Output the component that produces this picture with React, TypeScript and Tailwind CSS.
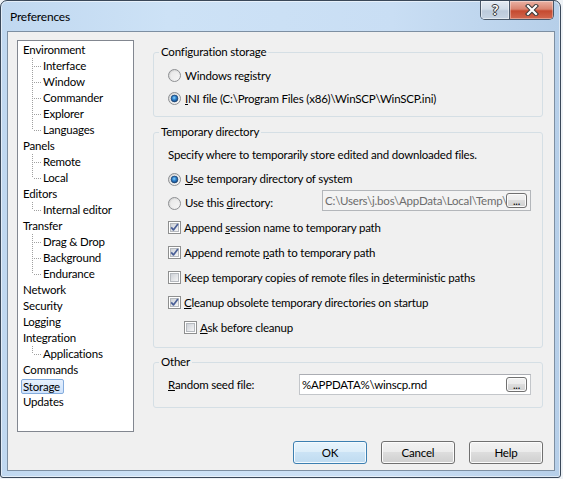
import React from "react";

type TreeNode = { label: string; children?: string[]; selected?: boolean };

const TREE: TreeNode[] = [
  { label: "Environment", children: ["Interface", "Window", "Commander", "Explorer", "Languages"] },
  { label: "Panels", children: ["Remote", "Local"] },
  { label: "Editors", children: ["Internal editor"] },
  { label: "Transfer", children: ["Drag & Drop", "Background", "Endurance"] },
  { label: "Network" },
  { label: "Security" },
  { label: "Logging" },
  { label: "Integration", children: ["Applications"] },
  { label: "Commands" },
  { label: "Storage", selected: true },
  { label: "Updates" },
];

function Radio({ checked }: { checked?: boolean }) {
  return (
    <svg width="13" height="13" viewBox="0 0 13 13" className="shrink-0">
      <defs>
        <linearGradient id="radio-ring" x1="0" y1="0" x2="1" y2="1">
          <stop offset="0" stopColor="#cfcfcf" />
          <stop offset="1" stopColor="#fdfdfd" />
        </linearGradient>
        <radialGradient id="radio-dot" cx="0.45" cy="0.4" r="0.65">
          <stop offset="0" stopColor="#8fd6fb" />
          <stop offset="0.45" stopColor="#2c7fcb" />
          <stop offset="1" stopColor="#123e74" />
        </radialGradient>
      </defs>
      <circle cx="6.5" cy="6.5" r="6" fill="url(#radio-ring)" stroke="#8d8f92" />
      <circle cx="6.5" cy="6.5" r="4.2" fill="#f4f4f4" fillOpacity="0.6" />
      {checked && <circle cx="6.5" cy="6.5" r="3.4" fill="url(#radio-dot)" stroke="#1b3f6b" strokeWidth="0.7" />}
    </svg>
  );
}

function Check({ checked }: { checked?: boolean }) {
  return (
    <svg width="13" height="13" viewBox="0 0 13 13" className="shrink-0">
      <defs>
        <linearGradient id="check-fill" x1="0" y1="0" x2="1" y2="1">
          <stop offset="0" stopColor="#cbcfd5" />
          <stop offset="1" stopColor="#f7f7f7" />
        </linearGradient>
      </defs>
      <rect x="0.5" y="0.5" width="12" height="12" fill="#fff" stroke="#8e8f8f" />
      <rect x="2.5" y="2.5" width="8" height="8" fill="url(#check-fill)" stroke="#b5b9be" />
      {checked && (
        <path d="M3.2 6.4 L5.4 8.9 L9.9 3.1" fill="none" stroke="#4a5f97" strokeWidth="1.7" strokeLinejoin="round" />
      )}
    </svg>
  );
}

function Dots() {
  return (
    <div className="mr-[3px] flex h-[15px] w-[21px] shrink-0 items-end justify-center rounded-[3px] border border-[#707070] bg-[linear-gradient(#f2f2f2_0%,#ebebeb_49%,#dddddd_50%,#cfcfcf_100%)] pb-[1px] text-[11px] leading-[11px] shadow-[inset_0_0_0_1px_#fbfbfb]">
      ...
    </div>
  );
}

function Button({ children, primary }: { children: React.ReactNode; primary?: boolean }) {
  return (
    <div
      className={
        primary
          ? "flex h-[23px] w-[74px] items-center justify-center rounded-[3px] border border-[#3c7fb1] bg-[linear-gradient(#e8f4fc_0%,#dcedf9_49%,#cbe3f5_50%,#bfdbf0_100%)] shadow-[inset_0_0_0_1px_#f4fafe]"
          : "flex h-[23px] w-[74px] items-center justify-center rounded-[3px] border border-[#707070] bg-[linear-gradient(#f2f2f2_0%,#ebebeb_49%,#dddddd_50%,#cfcfcf_100%)] shadow-[inset_0_0_0_1px_#fcfcfc]"
      }
    >
      {children}
    </div>
  );
}

function Tree() {
  return (
    <div className="mt-[8px] h-[392px] w-[117px] shrink-0 border border-[#828790] bg-white pt-[1px]">
      {TREE.map((node) => (
        <React.Fragment key={node.label}>
          <div className="flex h-[16px] items-center pl-[5px]">
            {node.selected ? (
              <span className="-ml-[2px] flex h-[15px] items-center rounded-[2px] border border-[#84acdd] bg-[linear-gradient(#e6f0fd,#cfe2fb)] pl-[1px] pr-[3px] leading-[13px]">
                {node.label}
              </span>
            ) : (
              <span>{node.label}</span>
            )}
          </div>
          {node.children?.map((child, i) => {
            const last = i === node.children!.length - 1;
            return (
              <div key={child} className="flex h-[16px] items-center pl-[14px]">
                <svg width="9" height="16" viewBox="0 0 9 16" className="shrink-0">
                  <line x1="0.5" y1="0" x2="0.5" y2={last ? 8 : 16} stroke="#a0a0a0" strokeDasharray="1 1" shapeRendering="crispEdges" />
                  <line x1="2" y1="8.5" x2="9" y2="8.5" stroke="#a0a0a0" strokeDasharray="1 1" shapeRendering="crispEdges" />
                </svg>
                <span className="ml-[2px]">{child}</span>
              </div>
            );
          })}
        </React.Fragment>
      ))}
    </div>
  );
}

export default function App() {
  return (
    <div className="h-[479px] w-[563px] overflow-hidden bg-[#eef2f6] font-['Lato',sans-serif] text-[11.5px] leading-[16px] tracking-[-0.2px] text-black">
      <div className="flex h-[478px] w-[561px] flex-col rounded-t-[7px] rounded-b-[3px] border border-[#3a4859] bg-[linear-gradient(90deg,#c0d8f0,#cde2f6_30%,#c9def4_70%,#b6cfe9)] shadow-[inset_0_0_0_1px_rgba(255,255,255,0.55)]">
        {/* caption */}
        <div className="flex h-[30px] shrink-0 items-start justify-between">
          <span className="ml-[9px] mt-[8px] text-[12px]">Preferences</span>
          <div className="mr-[6px] flex h-[19px] overflow-hidden rounded-b-[5px] border border-t-0 border-[#4b596a]">
            <div className="flex w-[28px] items-center justify-center bg-[linear-gradient(#e4ebf3_0%,#d2dde9_45%,#bccadb_55%,#c7d4e3_100%)] shadow-[inset_0_0_0_1px_rgba(255,255,255,0.5)]">
              <span className="text-[14px] font-bold leading-[14px] text-white [text-shadow:0_0_1px_#333,0_0_1px_#333,1px_0_0_#444,-1px_0_0_#444,0_1px_0_#444,0_-1px_0_#444]">
                ?
              </span>
            </div>
            <div className="flex w-[44px] items-center justify-center border-l border-[#4b596a] bg-[linear-gradient(#eab2a4_0%,#d98470_45%,#c54a30_55%,#d2684f_100%)] shadow-[inset_0_0_0_1px_rgba(255,255,255,0.35)]">
              <svg width="14" height="12" viewBox="0 0 14 12">
                <path d="M3 2 L11 10 M11 2 L3 10" stroke="#3a3a3a" strokeWidth="4.2" strokeLinecap="square" />
                <path d="M3 2 L11 10 M11 2 L3 10" stroke="#fff" strokeWidth="2.2" strokeLinecap="square" />
              </svg>
            </div>
          </div>
        </div>

        {/* client area */}
        <div className="mb-[6px] ml-[6px] mr-[5px] flex flex-1 items-start border border-[#7d8fa2] bg-[#f0f0f0] pl-[9px]">
          <Tree />

          <div className="ml-[19px] flex w-[390px] flex-col pt-[12px]">
            <fieldset className="rounded-[3px] border border-[#d5dfe5]">
              <legend className="ml-[5px] px-[2px]">Configuration storage</legend>
              <div className="pb-[6px] pl-[14px] pt-[4px]">
                <div className="flex h-[23px] items-center">
                  <Radio />
                  <span className="ml-[4px]">
                    Windows re<u>g</u>istry
                  </span>
                </div>
                <div className="flex h-[23px] items-center">
                  <Radio checked />
                  <span className="ml-[4px]">
                    <u>I</u>NI file (C:\Program Files (x86)\WinSCP\WinSCP.ini)
                  </span>
                </div>
              </div>
            </fieldset>

            <fieldset className="mt-[7px] rounded-[3px] border border-[#d5dfe5]">
              <legend className="ml-[5px] px-[2px]">Temporary directory</legend>
              <div className="pb-[7px] pl-[14px] pr-[11px] pt-[3px]">
                <div className="flex h-[24px] items-center">Specify where to temporarily store edited and downloaded files.</div>
                <div className="flex h-[24px] items-center">
                  <Radio checked />
                  <span className="ml-[4px]">
                    <u>U</u>se temporary directory of system
                  </span>
                </div>
                <div className="flex h-[24px] items-center">
                  <div className="flex w-[154px] items-center">
                    <Radio />
                    <span className="ml-[4px]">
                      Use this <u>d</u>irectory:
                    </span>
                  </div>
                  <div className="mb-[5px] flex h-[21px] w-[209px] items-center border border-[#b3b6ba] bg-[#f3f3f3]">
                    <span className="flex-1 overflow-hidden whitespace-nowrap pl-[2px] text-[#6d6d6d]">
                      C:\Users\j.bos\AppData\Local\Temp\
                    </span>
                    <Dots />
                  </div>
                </div>
                <div className="flex h-[25px] items-center">
                  <Check checked />
                  <span className="ml-[3px]">
                    Append <u>s</u>ession name to temporary path
                  </span>
                </div>
                <div className="flex h-[25px] items-center">
                  <Check checked />
                  <span className="ml-[3px]">
                    Append remote <u>p</u>ath to temporary path
                  </span>
                </div>
                <div className="flex h-[25px] items-center">
                  <Check />
                  <span className="ml-[3px]">
                    Keep temporary copies of remote files in <u>d</u>eterministic paths
                  </span>
                </div>
                <div className="flex h-[25px] items-center">
                  <Check checked />
                  <span className="ml-[3px]">
                    <u>C</u>leanup obsolete temporary directories on startup
                  </span>
                </div>
                <div className="flex h-[25px] items-center pl-[16px]">
                  <Check />
                  <span className="ml-[3px]">
                    <u>A</u>sk before cleanup
                  </span>
                </div>
              </div>
            </fieldset>

            <fieldset className="mt-[6px] rounded-[3px] border border-[#d5dfe5]">
              <legend className="ml-[5px] px-[2px]">Other</legend>
              <div className="pb-[12px] pl-[14px] pr-[11px] pt-[4px]">
                <div className="flex h-[21px] items-center">
                  <span className="w-[131px] shrink-0">
                    <u>R</u>andom seed file:
                  </span>
                  <div className="flex h-[21px] w-[232px] items-center border border-[#c3c6ca] border-t-[#abadb3] bg-white">
                    <span className="flex-1 overflow-hidden whitespace-nowrap pl-[2px]">%APPDATA%\winscp.rnd</span>
                    <Dots />
                  </div>
                </div>
              </div>
            </fieldset>

            <div className="mt-[33px] flex justify-end gap-[14px]">
              <Button primary>OK</Button>
              <Button>Cancel</Button>
              <Button>Help</Button>
            </div>
          </div>
        </div>
      </div>
    </div>
  );
}
